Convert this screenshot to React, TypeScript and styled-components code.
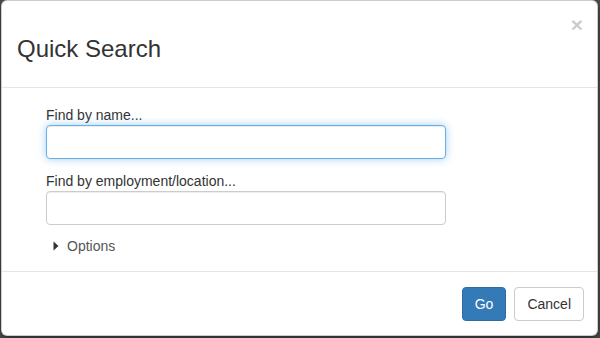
import React from "react";
import styled, { createGlobalStyle } from "styled-components";

const Global = createGlobalStyle`
  html, body { margin: 0; padding: 0; }
  body {
    background: #4d4d4d;
    font-family: "Liberation Sans", Arial, Helvetica, sans-serif;
    font-size: 14px;
    line-height: 1.42857;
    color: #333;
    width: 600px;
    height: 338px;
    overflow: hidden;
  }
  * { box-sizing: border-box; }
`;

const Backdrop = styled.div`
  display: flex;
  padding-left: 1px;
`;

const Modal = styled.div`
  width: 597px;
  height: 336px;
  background: #fff;
  border: 1px solid rgba(0, 0, 0, 0.2);
  border-radius: 6px;
  box-shadow: 0 3px 9px rgba(0, 0, 0, 0.5);
  display: flex;
  flex-direction: column;
  overflow: hidden;
`;

const Header = styled.div`
  display: flex;
  justify-content: space-between;
  align-items: flex-start;
  padding: 15px 14px 15px 15px;
  border-bottom: 1px solid #e5e5e5;
`;

const Title = styled.h3`
  margin: 20px 0 10px;
  font-size: 24px;
  font-weight: 500;
  line-height: 1.1;
  color: #333;
`;

const Close = styled.button`
  margin-top: -2px;
  padding: 0;
  border: 0;
  background: transparent;
  font-family: "Liberation Sans", Arial, sans-serif;
  font-size: 21px;
  font-weight: 700;
  line-height: 1;
  color: #000;
  opacity: 0.2;
  text-shadow: 0 1px 0 #fff;
  cursor: pointer;
`;

const Body = styled.div`
  flex: 1;
  padding: 17px 15px 15px 44px;
`;

const Form = styled.div`
  width: 400px;
  display: flex;
  flex-direction: column;
`;

const Group = styled.div`
  display: flex;
  flex-direction: column;
  margin-bottom: 12px;
`;

const Label = styled.label`
  font-size: 14px;
  line-height: 20px;
  color: #333;
`;

const Input = styled.input<{ $focused?: boolean }>`
  height: 34px;
  width: 100%;
  padding: 6px 12px;
  font-size: 14px;
  font-family: inherit;
  color: #555;
  background: #fff;
  border: 1px solid ${(p) => (p.$focused ? "#66afe9" : "#ccc")};
  border-radius: 4px;
  outline: none;
  box-shadow: ${(p) =>
    p.$focused
      ? "inset 0 1px 1px rgba(0,0,0,.075), 0 0 8px rgba(102,175,233,.6)"
      : "inset 0 1px 1px rgba(0,0,0,.075)"};
`;

const Toggle = styled.div`
  display: flex;
  align-items: center;
  gap: 8px;
  margin-top: -1px;
  padding-left: 7px;
  line-height: 20px;
  color: #555;
  font-size: 14px;
`;

const Footer = styled.div`
  display: flex;
  justify-content: flex-end;
  gap: 8px;
  padding: 15px 13px 16px 15px;
  border-top: 1px solid #e5e5e5;
`;

const Button = styled.button<{ $primary?: boolean }>`
  height: 34px;
  padding: 6px 12px;
  font-family: inherit;
  font-size: 14px;
  line-height: 20px;
  border-radius: 4px;
  border: 1px solid ${(p) => (p.$primary ? "#2e6da4" : "#ccc")};
  background: ${(p) => (p.$primary ? "#337ab7" : "#fff")};
  color: ${(p) => (p.$primary ? "#fff" : "#333")};
  cursor: pointer;
`;

export default function App() {
  return (
    <>
      <Global />
      <Backdrop>
        <Modal>
          <Header>
            <Title>Quick Search</Title>
            <Close aria-label="Close">×</Close>
          </Header>
          <Body>
            <Form>
              <Group>
                <Label>Find by name...</Label>
                <Input $focused />
              </Group>
              <Group>
                <Label>Find by employment/location...</Label>
                <Input />
              </Group>
              <Toggle>
                <svg width="6" height="10" viewBox="0 0 6 10">
                  <path d="M0.5 0.5 L5.5 5 L0.5 9.5 Z" fill="#333" />
                </svg>
                Options
              </Toggle>
            </Form>
          </Body>
          <Footer>
            <Button $primary>Go</Button>
            <Button>Cancel</Button>
          </Footer>
        </Modal>
      </Backdrop>
    </>
  );
}
